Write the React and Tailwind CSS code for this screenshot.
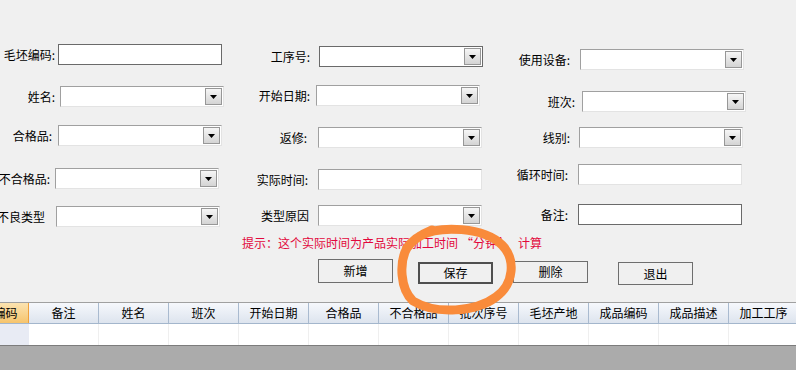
import React from 'react';

const FONT = { fontFamily: '"Noto Sans CJK SC", "Noto Sans", sans-serif' };

const Arrow = () => (
  <svg width="7" height="4" viewBox="0 0 7 4">
    <polygon points="0,0 7,0 3.5,4" fill="#000" />
  </svg>
);

const Control = ({ kind }) => {
  if (kind === 'text-dark') {
    return <div className="w-[164px] h-[21px] bg-white border border-[#6a6a6a]" />;
  }
  if (kind === 'text') {
    return (
      <div className="w-[164px] h-[21px] bg-white border border-t-[#a0a0a0] border-l-[#a0a0a0] border-r-[#e3e3e3] border-b-[#e3e3e3]" />
    );
  }
  const frame =
    kind === 'combo-focus'
      ? 'border-[#6a6a6a]'
      : 'border-t-[#a0a0a0] border-l-[#a0a0a0] border-r-[#e3e3e3] border-b-[#e3e3e3]';
  return (
    <div className={`w-[164px] h-[21px] bg-white border ${frame} flex justify-end p-[1px]`}>
      <div className="w-[17px] border border-[#979797] bg-gradient-to-b from-[#f6f6f6] to-[#d4d4d4] flex items-center justify-center">
        <Arrow />
      </div>
    </div>
  );
};

const Field = ({ f }) => (
  <div className={`flex items-center h-[21px] ${f.mt}`}>
    <div className={`flex justify-end shrink-0 whitespace-nowrap text-[12px] text-black ${f.lw}`}>
      {f.label}
    </div>
    <Control kind={f.kind} />
  </div>
);

const col1 = [
  { label: '毛坯编码:', mt: 'mt-[44px]', lw: 'w-[58px] pr-[3px]', kind: 'text-dark' },
  { label: '姓名:', mt: 'mt-[21px]', lw: 'w-[60px] pr-[5px]', kind: 'combo' },
  { label: '合格品:', mt: 'mt-[18px]', lw: 'w-[58px] pr-[6px]', kind: 'combo' },
  { label: '不合格品:', mt: 'mt-[22px]', lw: 'w-[55px] pr-[5px]', kind: 'combo' },
  { label: '不良类型', mt: 'mt-[17px]', lw: 'w-[56px] pr-[11px]', kind: 'combo' },
];

const col2 = [
  { label: '工序号:', mt: 'mt-[46px]', lw: 'w-[69px] pr-[9px]', kind: 'combo-focus' },
  { label: '开始日期:', mt: 'mt-[18px]', lw: 'w-[66px] pr-[6px]', kind: 'combo' },
  { label: '返修:', mt: 'mt-[21px]', lw: 'w-[68px] pr-[11px]', kind: 'combo' },
  { label: '实际时间:', mt: 'mt-[21px]', lw: 'w-[68px] pr-[10px]', kind: 'text' },
  { label: '类型原因', mt: 'mt-[15px]', lw: 'w-[68px] pr-[9px]', kind: 'combo' },
];

const col3 = [
  { label: '使用设备:', mt: 'mt-[49px]', lw: 'w-[75px] pr-[10px]', kind: 'combo' },
  { label: '班次:', mt: 'mt-[21px]', lw: 'w-[77px] pr-[7px]', kind: 'combo' },
  { label: '线别:', mt: 'mt-[15px]', lw: 'w-[74px] pr-[9px]', kind: 'combo' },
  { label: '循环时间:', mt: 'mt-[16px]', lw: 'w-[73px] pr-[10px]', kind: 'text' },
  { label: '备注:', mt: 'mt-[19px]', lw: 'w-[73px] pr-[10px]', kind: 'text-dark' },
];

const buttons = [
  { text: '新增', cls: 'mt-[7px] h-[24px] border border-[#6e6e6e]' },
  { text: '保存', cls: 'mt-[10px] ml-[25px] h-[22px] border-2 border-[#4f4f4f]' },
  { text: '删除', cls: 'mt-[9px] ml-[20px] h-[22px] border border-[#6e6e6e]' },
  { text: '退出', cls: 'mt-[10px] ml-[30px] h-[23px] border border-[#6e6e6e]' },
];

const columns = ['备注', '姓名', '班次', '开始日期', '合格品', '不合格品', '批次序号', '毛坯产地', '成品编码', '成品描述', '加工工序'];

export default function App() {
  return (
    <div className="relative w-[796px] h-[370px] overflow-hidden bg-[#f0f0f0] text-black" style={FONT}>
      {/* form fields */}
      <div className="flex h-[232px]">
        <div className="w-[250px] flex flex-col">
          {col1.map((f) => <Field key={f.label} f={f} />)}
        </div>
        <div className="w-[255px] flex flex-col">
          {col2.map((f) => <Field key={f.label} f={f} />)}
        </div>
        <div className="flex-1 flex flex-col">
          {col3.map((f) => <Field key={f.label} f={f} />)}
        </div>
      </div>

      {/* hint */}
      <div className="h-[20px] pl-[242px] pt-[4px] flex">
        <span className="text-[12px] leading-[14px] text-[#e2083c] whitespace-nowrap">
          提示：这个实际时间为产品实际加工时间
        </span>
        <span className="ml-[3px] text-[12px] leading-[14px] text-[#e2083c] whitespace-nowrap">“分钟”</span>
        <span className="ml-[9px] text-[12px] leading-[14px] text-[#e2083c] whitespace-nowrap">计算</span>
      </div>

      {/* buttons */}
      <div className="h-[50px] flex items-start pl-[318px]">
        {buttons.map((b) => (
          <button
            key={b.text}
            className={`w-[75px] bg-[#f0f0f0] text-[12px] flex items-center justify-center ${b.cls}`}
          >
            {b.text}
          </button>
        ))}
      </div>

      {/* grid */}
      <div className="border-t border-[#a0a0a0]">
        <div className="flex h-[21px] border-b border-[#a3b6cc]">
          <div className="-ml-[41px] w-[70px] shrink-0 flex items-center justify-center text-[12px] bg-gradient-to-b from-[#fbe3b0] to-[#f6c46c] border-r border-[#f0a13c]">
            毛坯编码
          </div>
          {columns.map((c) => (
            <div
              key={c}
              className="w-[70px] shrink-0 flex items-center justify-center text-[12px] bg-gradient-to-b from-[#f6f8fc] to-[#dde4ee] border-r border-[#a9bacf]"
            >
              {c}
            </div>
          ))}
        </div>
        <div className="flex h-[21px]">
          <div className="-ml-[41px] w-[70px] shrink-0 bg-[#e8ebf4]" />
          {columns.map((c) => (
            <div key={c} className="w-[70px] shrink-0 bg-white border-r border-[#efefef]" />
          ))}
        </div>
        <div className="h-px bg-[#7c7c7c]" />
        <div className="h-[40px] bg-[#ababab]" />
      </div>

      {/* hand-drawn annotation over the save button */}
      <svg className="absolute left-0 top-0 pointer-events-none" width="796" height="370" viewBox="0 0 796 370">
        <path
          d="M420 236 C440 225 484 227 502 245 C516 259 514 284 496 297 C476 312 436 315 413 301 C400 289 399 262 407 248 C412 240 420 235 432 230"
          fill="none"
          stroke="#f98b3b"
          strokeWidth="9"
          strokeLinecap="round"
          strokeLinejoin="round"
        />
      </svg>
    </div>
  );
}
